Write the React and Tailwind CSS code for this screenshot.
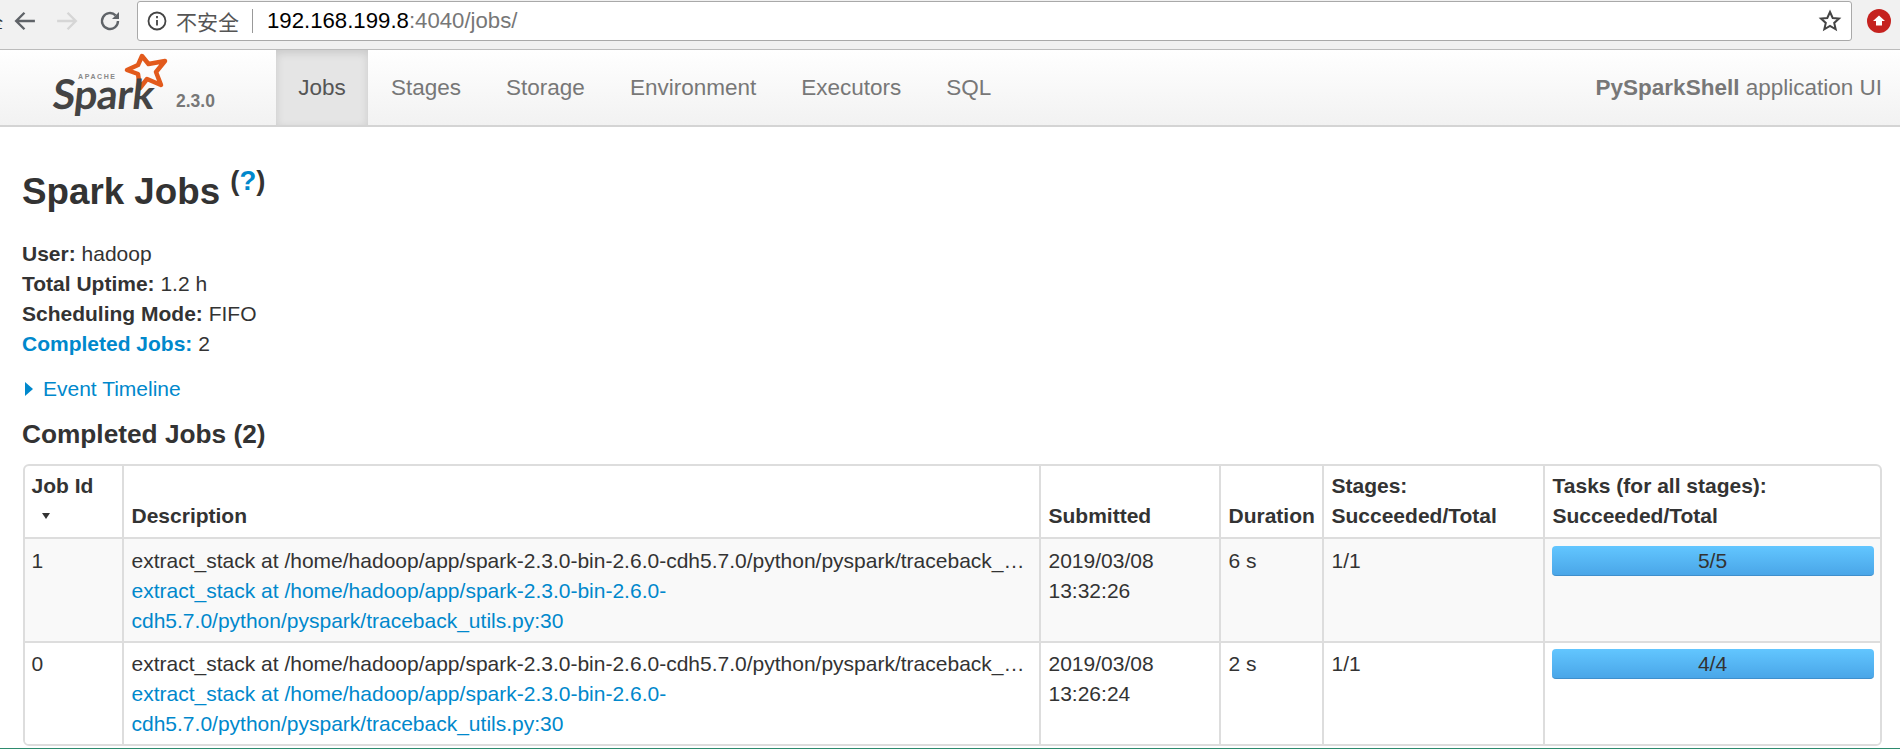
import React from "react";

const desc = "extract_stack at /home/hadoop/app/spark-2.3.0-bin-2.6.0-cdh5.7.0/python/pyspark/traceback_utils.py:30";
const descShort = "extract_stack at /home/hadoop/app/spark-2.3.0-bin-2.6.0-cdh5.7.0/python/pyspark/traceback_…";

function Row({ id, date, time, dur, tasks, odd }) {
  const td = "align-top border-l-2 border-t-2 border-[#ddd] px-[7.5px] pt-[6.5px] pb-[5px] first:border-l-0 first:pl-[6.5px]";
  return (
    <tr className={odd ? "bg-[#f9f9f9]" : "bg-white"}>
      <td className={td}>{id}</td>
      <td className={td}>
        <div className="whitespace-nowrap">{descShort}</div>
        <a className="block text-[#0088cc] w-[600px]">{desc}</a>
      </td>
      <td className={td}>{date}<br />{time}</td>
      <td className={td}>{dur}</td>
      <td className={td}>1/1</td>
      <td className={td}>
        <div className="-mx-px h-[30px] rounded-[4px] bg-gradient-to-b from-[#62c6ff] to-[#4aa6e8] border-b border-[#3f8fcc] text-center leading-[30px]">{tasks}</div>
      </td>
    </tr>
  );
}

function Star() {
  return (
    <svg viewBox="0 0 50 42" className="absolute left-[120px] top-0 w-[50px] h-[42px]">
      <path d="M22 6 L28.5 14 L45 11 L36 22 L41 35 L27 29 L20 38 L18 24 L7 20 L18 15 Z" fill="none" stroke="#e25a1c" strokeWidth="4.5" strokeLinejoin="round" />
    </svg>
  );
}

export default function App() {
  const th = "align-bottom text-left font-bold border-l-2 border-[#ddd] px-[7.5px] pt-[5px] pb-[6px] first:border-l-0 first:pl-[6.5px]";
  return (
    <div className="h-[753px] overflow-hidden bg-white text-[21px] leading-[30px] text-[#333] font-['Liberation_Sans',Arial,sans-serif]">
      {/* browser toolbar */}
      <div className="h-[50px] bg-[#f1f1f1] border-b border-[#bcbcbc] flex items-start">
        <div className="relative w-[137px] h-[42px] flex items-center pl-[14px] gap-[20px] shrink-0 overflow-hidden">
          <span className="absolute -left-[13px] top-[6px] text-[16px] text-[#333] font-['Noto_Sans_CJK_SC',sans-serif]">全</span>
          <svg width="22" height="22" viewBox="2 2 20 20" fill="none" stroke="#5f6368" strokeWidth="2.2"><path d="M21 12H4M11.5 4.5L4 12l7.5 7.5" /></svg>
          <svg width="22" height="22" viewBox="2 2 20 20" fill="none" stroke="#d6d6d6" strokeWidth="2.2"><path d="M3 12h17M12.5 4.5L20 12l-7.5 7.5" /></svg>
          <svg width="24" height="24" viewBox="0 0 24 24" fill="none" stroke="#5f6368" strokeWidth="2.4"><path d="M20 12a8 8 0 1 1-2.4-5.7" /><path d="M21 3v7h-7z" fill="#5f6368" strokeWidth="0" /></svg>
        </div>
        <div className="mt-px w-[1715px] h-[40px] bg-white border border-[#a9a9a9] rounded-[3px] flex items-center pl-[9px] pr-[9px] shrink-0">
          <svg width="20" height="20" viewBox="0 0 20 20" fill="none" stroke="#444" strokeWidth="1.8"><circle cx="10" cy="10" r="8.5" /><path d="M10 9v5.5M10 5v2.2" /></svg>
          <span className="ml-[9px] text-[#555] text-[21px] leading-[30px] font-['Noto_Sans_CJK_SC',sans-serif]">不安全</span>
          <span className="ml-[13px] w-px h-[24px] bg-[#999]" />
          <span className="ml-[14px] text-[22.2px]"><span className="text-black">192.168.199.8</span><span className="text-[#777]">:4040/jobs/</span></span>
          <svg className="ml-auto" width="24" height="24" viewBox="0 0 24 24" fill="none" stroke="#444" strokeWidth="2"><path d="M12 3l2.7 6 6.3.6-4.8 4.3 1.5 6.4L12 17l-5.7 3.3 1.5-6.4L3 9.6 9.3 9z" /></svg>
        </div>
        <div className="ml-[15px] mt-[9px] w-[24px] h-[24px] rounded-full bg-[#c5221f] flex items-center justify-center shrink-0">
          <svg width="14" height="14" viewBox="0 0 14 14" fill="#fff"><path d="M7 1.5l6 5.5H10v4.5H4V7H1z" /></svg>
        </div>
      </div>

      {/* spark nav */}
      <div className="h-[77px] bg-gradient-to-b from-white to-[#f2f2f2] border-b-2 border-[#d4d4d4] flex text-[#777] text-[22.5px]">
        <div className="relative w-[276px] shrink-0">
          <Star />
          <span className="absolute left-[53px] top-[19px] font-['Lato',sans-serif] font-bold text-[41px] leading-[50px] text-[#444] tracking-[-0.5px] -skew-x-6">Spark</span>
          <span className="absolute left-[78px] top-[23px] text-[7px] leading-[8px] font-bold text-[#888] tracking-[1.6px]">APACHE</span>
          <span className="absolute left-[176px] top-[41px] text-[17.5px] leading-[20px] font-bold text-[#777]">2.3.0</span>
        </div>
        <a className="w-[92px] bg-[#e5e5e5] text-[#555] shadow-[inset_0_3px_8px_rgba(0,0,0,0.125)] flex items-center justify-center">Jobs</a>
        <div className="flex items-center pl-[0.5px]">
          <a className="px-[22.5px]">Stages</a>
          <a className="px-[22.5px]">Storage</a>
          <a className="px-[22.5px]">Environment</a>
          <a className="px-[22.5px]">Executors</a>
          <a className="px-[22.5px]">SQL</a>
        </div>
        <div className="ml-auto pr-[18px] flex items-center"><span><b>PySparkShell</b> application UI</span></div>
      </div>

      {/* content */}
      <div className="pl-[22px] pr-[23px]">
        <h3 className="mt-[40px] text-[36.75px] leading-[50px] font-bold">
          Spark Jobs <sup className="text-[27.5px] -top-[14px]">(<a className="text-[#0088cc]">?</a>)</sup>
        </h3>
        <ul className="mt-[22px]">
          <li><b>User:</b> hadoop</li>
          <li><b>Total Uptime:</b> 1.2 h</li>
          <li><b>Scheduling Mode:</b> FIFO</li>
          <li><b className="text-[#0088cc]">Completed Jobs:</b> 2</li>
        </ul>
        <div className="mt-[15px] text-[#0088cc] flex items-center">
          <span className="w-0 h-0 border-y-[7px] border-y-transparent border-l-[8px] border-l-[#0088cc] mr-[10px] ml-[3px]" />
          Event Timeline
        </div>
        <h4 className="mt-[10px] mb-[10px] text-[26.25px] leading-[40px] font-bold">Completed Jobs (2)</h4>
        <div className="ml-px w-[1859px] border-2 border-[#ddd] rounded-[6px] overflow-hidden">
          <table className="w-full table-fixed border-collapse">
            <colgroup>
              <col className="w-[98px]" />
              <col className="w-[917px]" />
              <col className="w-[180px]" />
              <col className="w-[103px]" />
              <col className="w-[221px]" />
              <col />
            </colgroup>
            <thead>
              <tr>
                <th className={th}>Job Id<div className="flex pl-[10px] h-[30px] items-center"><span className="w-0 h-0 border-x-[4px] border-x-transparent border-t-[6px] border-t-[#333]" /></div></th>
                <th className={th}>Description</th>
                <th className={th}>Submitted</th>
                <th className={th}>Duration</th>
                <th className={th}>Stages:<br />Succeeded/Total</th>
                <th className={th}>Tasks (for all stages):<br />Succeeded/Total</th>
              </tr>
            </thead>
            <tbody>
              <Row id="1" date="2019/03/08" time="13:32:26" dur="6 s" tasks="5/5" odd />
              <Row id="0" date="2019/03/08" time="13:26:24" dur="2 s" tasks="4/4" />
            </tbody>
          </table>
        </div>
      </div>
      <div className="mt-[2px] h-px bg-[#2e8b6e]" />
    </div>
  );
}
